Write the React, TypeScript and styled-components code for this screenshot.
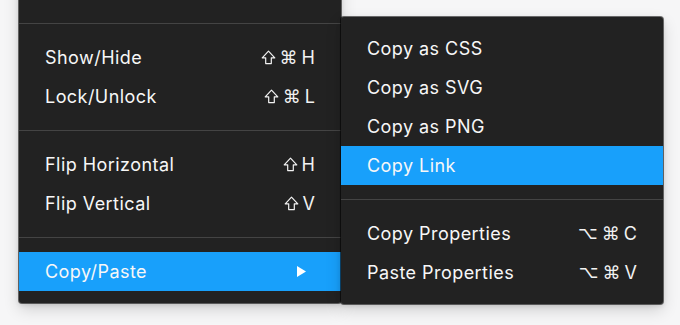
import React from "react";
import styled, { createGlobalStyle } from "styled-components";

const GlobalStyle = createGlobalStyle`
  html, body {
    margin: 0;
    padding: 0;
    background: #f6f6f7;
    overflow: hidden;
  }
  #root {
    width: 680px;
    height: 325px;
    overflow: hidden;
  }
`;

const StyledStage = styled.div`
  display: flex;
  align-items: flex-start;
  padding-left: 19px;
  height: 325px;
  font-family: Inter, "DejaVu Sans", sans-serif;
`;

const StyledMenu = styled.div<{ offset: number }>`
  width: 322px;
  margin-top: ${({ offset }) => offset}px;
  padding: 12px 0;
  box-sizing: border-box;
  background: #222222;
  border-radius: 3px;
  box-shadow: 0 0 0 1px rgba(0, 0, 0, 0.55), 0 6px 16px rgba(0, 0, 0, 0.16),
    0 2px 5px rgba(0, 0, 0, 0.12);
  display: flex;
  flex-direction: column;
`;

const StyledRow = styled.div<{ active?: boolean }>`
  height: 39px;
  padding: 0 26px;
  display: flex;
  align-items: center;
  justify-content: space-between;
  color: #f7f7f7;
  font-size: 18px;
  letter-spacing: 0.45px;
  background: ${({ active }) => (active ? "#18a0fb" : "transparent")};
`;

const StyledDivider = styled.div`
  height: 1px;
  margin: 14px 0;
  background: #444444;
`;

const StyledShortcut = styled.span`
  display: inline-flex;
  gap: 4px;
  align-items: center;
  color: #f2f2f2;
`;

const StyledKey = styled.span<{ size: number }>`
  font-family: "DejaVu Sans", sans-serif;
  font-size: ${({ size }) => size}px;
  line-height: 1;
  letter-spacing: 0;
`;

const StyledShiftIcon = styled.svg`
  width: 15px;
  height: 15px;
  fill: none;
  stroke: #f2f2f2;
  stroke-width: 1.2;
  stroke-linejoin: round;
`;

const StyledLetter = styled.span`
  font-size: 18px;
  line-height: 1;
  letter-spacing: 0;
`;

const StyledArrow = styled.svg`
  width: 9px;
  height: 11px;
  margin-right: 9px;
`;

interface InterfaceItem {
  label: string;
  keys?: string[];
  active?: boolean;
  submenu?: boolean;
}

const keySizes: Record<string, number> = {
  "⌘": 18,
  "⌥": 17,
};

const mainMenu: InterfaceItem[][] = [
  [{ label: "Ungroup" }],
  [
    { label: "Show/Hide", keys: ["⇧", "⌘", "H"] },
    { label: "Lock/Unlock", keys: ["⇧", "⌘", "L"] },
  ],
  [
    { label: "Flip Horizontal", keys: ["⇧", "H"] },
    { label: "Flip Vertical", keys: ["⇧", "V"] },
  ],
  [{ label: "Copy/Paste", active: true, submenu: true }],
];

const copyMenu: InterfaceItem[][] = [
  [
    { label: "Copy as CSS" },
    { label: "Copy as SVG" },
    { label: "Copy as PNG" },
    { label: "Copy Link", active: true },
  ],
  [
    { label: "Copy Properties", keys: ["⌥", "⌘", "C"] },
    { label: "Paste Properties", keys: ["⌥", "⌘", "V"] },
  ],
];

const KeyGlyph: React.FC<{ name: string }> = ({ name }) => {
  if (name === "⇧") {
    return (
      <StyledShiftIcon viewBox="0 0 15 15">
        <title>⇧</title>
        <path d="M7.5 1.2 L13.8 7.8 H10.3 V13.6 H4.7 V7.8 H1.2 Z" />
      </StyledShiftIcon>
    );
  }
  if (keySizes[name]) {
    return <StyledKey size={keySizes[name]}>{name}</StyledKey>;
  }
  return <StyledLetter>{name}</StyledLetter>;
};

const Shortcut: React.FC<{ keys: string[] }> = ({ keys }) => (
  <StyledShortcut>
    {keys.map((k) => (
      <KeyGlyph key={k} name={k} />
    ))}
  </StyledShortcut>
);

const Menu: React.FC<{ sections: InterfaceItem[][]; offset: number }> = ({
  sections,
  offset,
}) => (
  <StyledMenu offset={offset}>
    {sections.map((section, i) => (
      <React.Fragment key={i}>
        {i > 0 && <StyledDivider />}
        {section.map((item) => (
          <StyledRow key={item.label} active={item.active}>
            <span>{item.label}</span>
            {item.keys && <Shortcut keys={item.keys} />}
            {item.submenu && (
              <StyledArrow viewBox="0 0 9 11">
                <path d="M0 0 L9 5.5 L0 11 Z" fill="#ffffff" />
              </StyledArrow>
            )}
          </StyledRow>
        ))}
      </React.Fragment>
    ))}
  </StyledMenu>
);

export default function App() {
  return (
    <>
      <GlobalStyle />
      <StyledStage>
        <Menu sections={mainMenu} offset={-42} />
        <Menu sections={copyMenu} offset={17} />
      </StyledStage>
    </>
  );
}
